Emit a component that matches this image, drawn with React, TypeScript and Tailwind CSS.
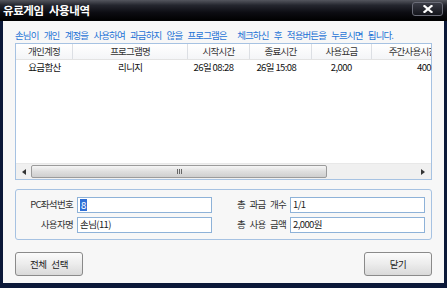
import React from "react";

const font = { fontFamily: '"Noto Sans CJK KR", "Liberation Sans", sans-serif' };

const columns = [
  { label: "개인계정", w: "w-[57px]" },
  { label: "프로그램명", w: "w-[115px]" },
  { label: "시작시간", w: "w-[62px]" },
  { label: "종료시간", w: "w-[62px]" },
  { label: "사용요금", w: "w-[60px]" },
  { label: "주간사용시간", w: "w-[82px]" },
];

function Field({ label, value, labelW, selected }: { label: string; value: string; labelW: string; selected?: boolean }) {
  return (
    <div className="flex items-center">
      <div className={`${labelW} text-right pr-[4px] text-[9.5px] tracking-[-0.7px] [word-spacing:3px] text-[#333] whitespace-nowrap`}>{label}</div>
      <div className="w-[135px] h-[16px] border border-[#8eb2d8] bg-white flex items-center px-[2px] text-[9.5px] tracking-[-0.6px] text-[#222]">
        {selected ? <span className="bg-[#2f6fd6] text-white px-[1px] leading-[12px]">{value}</span> : value}
      </div>
    </div>
  );
}

export default function App() {
  return (
    <div className="w-[447px] h-[288px] bg-[#0b1838] flex flex-col overflow-hidden select-none" style={font}>
      {/* title bar */}
      <div className="h-[21px] flex items-center justify-between pl-[3px] pr-[4px] bg-[linear-gradient(180deg,#54565e_0%,#24262e_25%,#0c0c12_60%,#000_100%)]">
        <span className="text-white font-bold text-[11.5px] tracking-[-0.4px] [word-spacing:3px] leading-none">유료게임 사용내역</span>
        <div className="w-[31px] h-[14px] mt-[-3px] rounded-[3px] border border-[#6b6d78] bg-[linear-gradient(180deg,#3a3c46,#14151c)] flex items-center justify-center">
          <svg width="10" height="8" viewBox="0 0 10 8">
            <path d="M1.5 1 L8.5 7 M8.5 1 L1.5 7" stroke="#fff" strokeWidth="2.2" strokeLinecap="square" />
          </svg>
        </div>
      </div>

      {/* body */}
      <div className="flex-1 mx-[3px] mb-[5px] bg-[#f7f7f7] px-[12px] pt-[8px] flex flex-col">
        <div className="text-[9.5px] leading-[12px] tracking-[-0.9px] [word-spacing:4px] text-[#1f74d6] whitespace-nowrap">
          손님이 개인 계정을 사용하여 과금하지 않을 프로그램은&nbsp; 체크하신 후 적용버튼을 누르시면 됩니다.
        </div>

        {/* list */}
        <div className="mt-[2px] h-[137px] border border-[#a6c2e2] bg-white flex flex-col">
          <div className="h-[16px] flex border-b border-[#e3e3e3] bg-[linear-gradient(180deg,#ffffff,#f4f5f7)] overflow-hidden">
            {columns.map((c) => (
              <div
                key={c.label}
                className={`${c.w} shrink-0 border-r border-[#dcdfe4] flex items-center justify-center text-[9.5px] tracking-[-0.8px] text-[#333] whitespace-nowrap overflow-hidden`}
              >
                {c.label}
              </div>
            ))}
          </div>
          <div className="h-[14px] flex items-center text-[9.5px] tracking-[-0.6px] text-[#111] whitespace-nowrap">
            <div className="w-[57px] text-center">요금합산</div>
            <div className="w-[115px] text-center">리니지</div>
            <div className="w-[62px] pl-[6px]">26일 08:28</div>
            <div className="w-[62px] pl-[7px]">26일 15:08</div>
            <div className="w-[60px] text-center">2,000</div>
            <div className="w-[60px] text-right">400</div>
          </div>
          <div className="flex-1" />
          {/* horizontal scrollbar */}
          <div className="h-[16px] flex items-center bg-[#f0f0f0] border-t border-[#e8e8e8] px-[2px]">
            <div className="w-[12px] flex items-center justify-center">
              <svg width="4" height="6" viewBox="0 0 4 6"><path d="M4 0 L0 3 L4 6 Z" fill="#333" /></svg>
            </div>
            <div className="ml-[1px] w-[296px] h-[13px] rounded-[2px] border border-[#9b9b9b] bg-[linear-gradient(180deg,#f6f6f6,#dedede_50%,#cfcfcf)] flex items-center justify-center">
              <div className="flex gap-[1px]">
                <div className="w-[1px] h-[5px] bg-[#666]" />
                <div className="w-[1px] h-[5px] bg-[#666]" />
                <div className="w-[1px] h-[5px] bg-[#666]" />
              </div>
            </div>
            <div className="flex-1" />
            <div className="w-[12px] flex items-center justify-center">
              <svg width="4" height="6" viewBox="0 0 4 6"><path d="M0 0 L4 3 L0 6 Z" fill="#333" /></svg>
            </div>
          </div>
        </div>

        {/* info group */}
        <div className="mt-[9px] h-[51px] border border-[#a6c2e2] rounded-[3px] flex flex-col justify-center gap-[4px]">
          <div className="flex">
            <Field label="PC좌석번호" value="8" labelW="w-[61px]" selected />
            <Field label="총 과금 개수" value="1/1" labelW="w-[78px]" />
          </div>
          <div className="flex">
            <Field label="사용자명" value="손님(11)" labelW="w-[61px]" />
            <Field label="총 사용 금액" value="2,000원" labelW="w-[78px]" />
          </div>
        </div>

        {/* buttons */}
        <div className="mt-[12px] flex justify-between">
          <button className="w-[68px] h-[24px] rounded-[3px] border border-[#8a8a8a] bg-[linear-gradient(180deg,#fbfbfb,#ececec_50%,#d9d9d9)] text-[9.5px] tracking-[-0.4px] [word-spacing:3px] text-[#222]">
            전체 선택
          </button>
          <button className="w-[68px] h-[24px] rounded-[3px] border border-[#8a8a8a] bg-[linear-gradient(180deg,#fbfbfb,#ececec_50%,#d9d9d9)] text-[9.5px] tracking-[-0.4px] text-[#222]">
            닫기
          </button>
        </div>
      </div>
    </div>
  );
}
